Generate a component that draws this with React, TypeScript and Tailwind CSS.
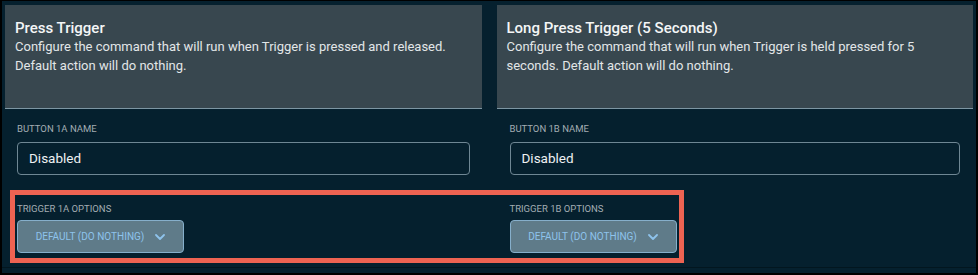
import React from "react";

const font = { fontFamily: "Roboto, 'Noto Sans', 'Liberation Sans', sans-serif" };

function Chevron() {
  return (
    <svg width="10" height="6" viewBox="0 0 10 6" fill="none">
      <polyline points="1,1 5,5 9,1" stroke="#8ec3ec" strokeWidth="1.8" strokeLinecap="round" strokeLinejoin="round" />
    </svg>
  );
}

function Column({
  title,
  desc,
  nameLabel,
  optLabel,
  inset,
}: {
  title: string;
  desc: string;
  nameLabel: string;
  optLabel: string;
  inset: string;
}) {
  return (
    <div className="flex flex-col">
      <div className="h-[104px] bg-[#38474f] border-b border-[#7d96a3] px-[10px] pt-[14px]">
        <div className="text-[15px] leading-[18px] font-medium text-[#f4f6f7]">{title}</div>
        <div className="text-[13px] leading-[19px] text-[#e2e6e8]">{desc}</div>
      </div>
      <div className={inset}>
        <div className="mt-[13px] text-[9.5px] leading-[14px] text-[#a3adb3] uppercase">{nameLabel}</div>
        <div className="mt-[6px] h-[33px] rounded-[4px] border border-[#6f8794] flex items-center pl-[11px] text-[13.5px] text-[#eef1f2]">
          Disabled
        </div>
        <div className="mt-[27px] text-[9.5px] leading-[14px] text-[#a3adb3] uppercase">{optLabel}</div>
        <div className="mt-[4px] w-[167px] h-[33px] rounded-[4px] border border-[#86afcb] bg-[#5f7b89] flex items-center justify-center gap-[11px]">
          <span className="text-[10px] text-[#8ec3ec]">DEFAULT (DO NOTHING)</span>
          <Chevron />
        </div>
      </div>
    </div>
  );
}

export default function App() {
  return (
    <div className="w-[978px] h-[275px] bg-black pt-px px-[2px] pb-[2px]" style={font}>
      <div className="relative h-full bg-[#05202e] flex flex-col">
        <div className="pt-[4px] px-[3px] grid grid-cols-2 gap-x-[15px]">
          <Column
            title="Press Trigger"
            desc="Configure the command that will run when Trigger is pressed and released. Default action will do nothing."
            nameLabel="Button 1A Name"
            optLabel="Trigger 1A Options"
            inset="px-[12px]"
          />
          <Column
            title="Long Press Trigger (5 Seconds)"
            desc="Configure the command that will run when Trigger is held pressed for 5 seconds. Default action will do nothing."
            nameLabel="Button 1B Name"
            optLabel="Trigger 1B Options"
            inset="pl-[13px] pr-[13px]"
          />
        </div>
        <div className="mt-auto mb-[5px] h-px bg-[#02161f]" />
        <div className="absolute left-[8px] top-[189px] w-[674px] h-[73px] border-[5px] border-[#ee6352]" />
      </div>
    </div>
  );
}
